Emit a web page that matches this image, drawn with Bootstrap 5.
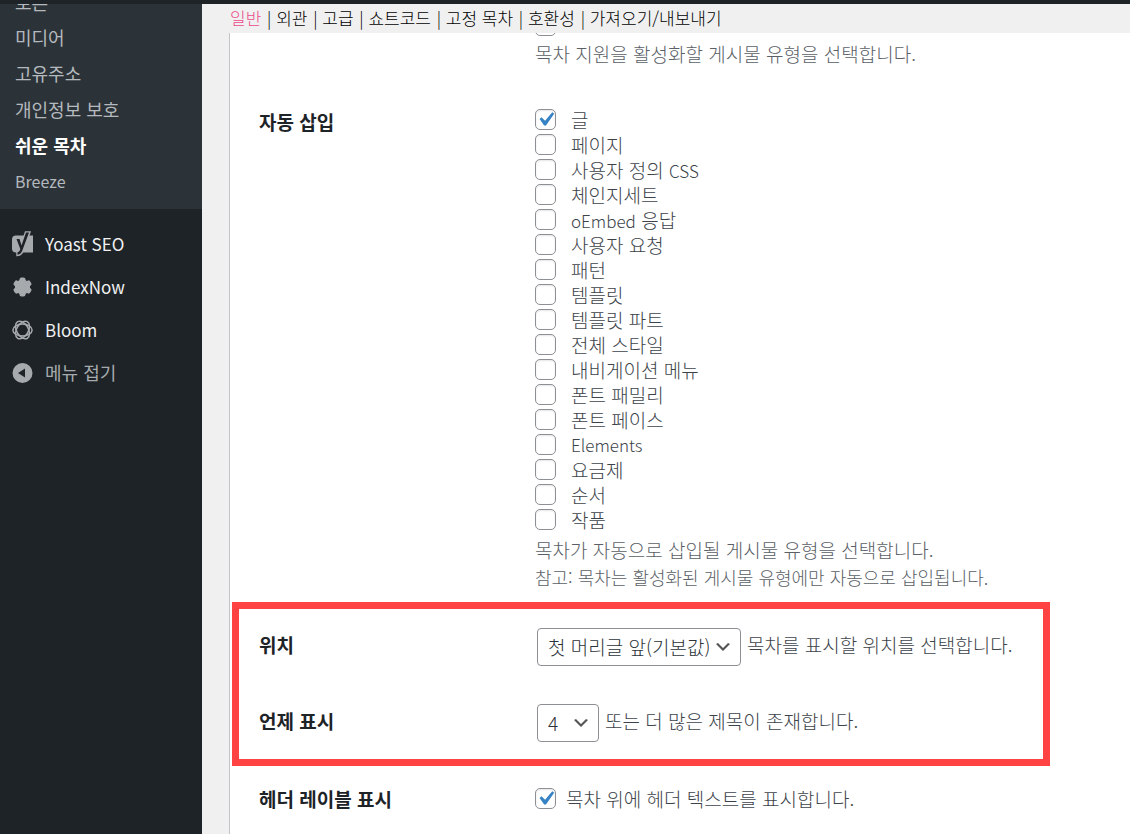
<!DOCTYPE html>
<html lang="ko">
<head>
<meta charset="utf-8">
<meta name="viewport" content="width=device-width, initial-scale=1">
<title>쉬운 목차</title>
<link href="https://cdn.jsdelivr.net/npm/bootstrap@5.3.0/dist/css/bootstrap.min.css" rel="stylesheet">
<style>
body { font-family: "Noto Sans CJK KR", sans-serif; font-size: 19px; font-weight: 300; line-height: 25px; color: #3c434a; background: #f0f0f0; }
.admin-bar { height: 4px; background: #1d2327; }
.side { width: 202px; flex: none; background: #1d2327; font-size: 18px; font-weight: 400; }
.side a, .side button { text-decoration: none; }
.submenu { background: #2c3338; padding-bottom: 9px; }
.submenu a { display: block; height: 36px; line-height: 35px; padding-left: 15px; color: #b4b9be; }
.submenu a.current { color: #fff; font-weight: 700; }
.submenu a.latin-item { font-size: 16px; }
.submenu .scrolled { height: 16px; overflow: hidden; display: flex; align-items: flex-end; }
.submenu .scrolled a { line-height: 37px; }
.main-menu { padding-top: 13px; }
.main-menu a, .main-menu button { height: 43px; padding: 0 0 0 11px; gap: 11px; color: #f0f0f1; }
.main-menu a { font-size: 17px; }
.main-menu button { color: #a7aaad; }
.main-menu svg { width: 23px; height: 26px; flex: none; }
.content-area { padding-left: 27px; }
.tabs { height: 29px; padding-left: 1px; font-size: 17px; line-height: 27px; color: #000; white-space: nowrap; }
.tabs a { color: #000; text-decoration: none; margin-right: 1px; }
.tabs a.current { color: #eb4b8c; }
.panel { background: #fff; border-left: 1px solid #c3c4c7; }
.setting { padding-left: 29px; }
.setting-name { width: 276px; flex: none; font-size: 19px; font-weight: 700; color: #1d2327; }
.auto-insert { padding-top: 41px; }
.auto-insert .setting-name { padding-top: 2px; }
.hint { color: #5a6066; margin-top: 5px; }
.note-text { font-size: 18px; margin-top: 3px; }
.latin { font-size: 17px; }
.form-check-input.box { width: 21px; height: 21px; margin: 0; border: 1px solid #8c8f94; border-radius: 5px; background-color: #fff; box-shadow: inset 0 1px 2px rgba(0,0,0,.1); flex: none; }
.form-check-input.box:checked { background-color: #fff; border-color: #8c8f94; background-size: 28px; background-position: center; background-image: url("data:image/svg+xml,%3Csvg xmlns='http://www.w3.org/2000/svg' viewBox='0 0 20 20'%3E%3Cpath d='M14.83 4.89l1.34.94-5.81 8.38H9.02L5.78 9.67l1.34-1.25 2.57 2.4z' fill='%233582c4'/%3E%3C/svg%3E"); }
.box-cut { height: 3px; overflow: hidden; display: flex; align-items: flex-end; }
.types label { height: 25px; gap: 15px; }
.form-select.pick { width: auto; height: 38px; padding: 0 31px 0 10px; font-size: 19px; font-weight: 300; line-height: 36px; color: #2c3338; border: 1px solid #8c8f94; border-radius: 4px; background-size: 20px 20px; background-position: right 7px center; background-image: url("data:image/svg+xml,%3Csvg xmlns='http://www.w3.org/2000/svg' viewBox='0 0 20 20'%3E%3Cpath d='M5 6l5 5 5-5 2 1-7 7-7-7 2-1z' fill='%23555'/%3E%3C/svg%3E"); }
.form-select.pick-number { width: 62px; }
.marked { max-width: 818px; margin: 12px 0 0 2px; border: 7px solid #ff4343; padding: 19px 0 17px; }
.marked .setting { padding-left: 20px; }
.marked .setting + .setting { margin-top: 38px; }
.marked .setting-name { width: 278px; padding-bottom: 6px; }
.marked .after { padding-bottom: 6px; }
.pair { gap: 6px; }
.header-row { padding-top: 20px; }
.header-row .pair { gap: 10px; }
</style>
</head>
<body>
<div class="admin-bar"></div>
<div class="d-flex">
  <nav class="side" aria-label="관리자 메뉴">
    <div class="submenu">
      <div class="scrolled"><a href="#">토론</a></div>
      <a href="#">미디어</a>
      <a href="#">고유주소</a>
      <a href="#">개인정보 보호</a>
      <a href="#" class="current">쉬운 목차</a>
      <a href="#" class="latin-item">Breeze</a>
    </div>
    <div class="main-menu d-flex flex-column">
      <a href="#" class="d-flex align-items-center">
        <svg viewBox="0 0 23 26"><path d="M5 4.500h17v17H5q-4 0-4-4v-9q0-4 4-4z" fill="#a7aaad"/><path d="M14.500 1h4.500l-6.500 18q-1.800 5.500-6.500 5.500v-3.500q3 0 3.200-3z" fill="#a7aaad" stroke="#a7aaad" stroke-width="1.500"/><path d="M5.500 8h3l2 6.500L15 1.500h3L11.500 19q-1.500 4.500-5 4.700v-2.200q2.500-.5 2.800-3.500z" fill="#1d2327"/></svg>
        Yoast SEO</a>
      <a href="#" class="d-flex align-items-center">
        <svg viewBox="0 0 23 26"><g fill="#a7aaad"><circle cx="11.500" cy="13" r="7.600"/><rect id="lobe" x="8.500" y="3.500" width="6" height="19" rx="2"/><use href="#lobe" transform="rotate(60 11.500 13)"/><use href="#lobe" transform="rotate(120 11.500 13)"/></g></svg>
        IndexNow</a>
      <a href="#" class="d-flex align-items-center">
        <svg viewBox="0 0 23 26" fill="none" stroke="#a7aaad" stroke-width="1.500"><ellipse id="ring" cx="11.500" cy="13" rx="9.600" ry="5.900"/><use href="#ring" transform="rotate(60 11.500 13)"/><use href="#ring" transform="rotate(120 11.500 13)"/></svg>
        Bloom</a>
      <button type="button" class="d-flex align-items-center border-0 bg-transparent text-start">
        <svg viewBox="0 0 23 26"><circle cx="11.500" cy="13" r="10" fill="#a7aaad"/><path d="M14 8.500v9L7 13z" fill="#1d2327"/></svg>
        메뉴 접기</button>
    </div>
  </nav>
  <main class="content-area flex-grow-1 d-flex flex-column min-vh-100">
    <div class="tabs"><a href="#" class="current">일반</a> | <a href="#">외관</a> | <a href="#">고급</a> | <a href="#">쇼트코드</a> | <a href="#">고정 목차</a> | <a href="#">호환성</a> | <a href="#">가져오기/내보내기</a></div>
    <form class="panel flex-grow-1">
      <div class="setting d-flex">
        <div class="setting-name"></div>
        <div>
          <div class="box-cut"><input type="checkbox" class="form-check-input box" aria-label="작품"></div>
          <div class="hint">목차 지원을 활성화할 게시물 유형을 선택합니다.</div>
        </div>
      </div>
      <div class="setting auto-insert d-flex">
        <div class="setting-name">자동 삽입</div>
        <div>
          <div class="types d-flex flex-column align-items-start">
            <label class="d-flex align-items-center"><input type="checkbox" class="form-check-input box" checked>글</label>
            <label class="d-flex align-items-center"><input type="checkbox" class="form-check-input box">페이지</label>
            <label class="d-flex align-items-center"><input type="checkbox" class="form-check-input box"><span>사용자 정의 <span class="latin">CSS</span></span></label>
            <label class="d-flex align-items-center"><input type="checkbox" class="form-check-input box">체인지세트</label>
            <label class="d-flex align-items-center"><input type="checkbox" class="form-check-input box"><span><span class="latin">oEmbed</span> 응답</span></label>
            <label class="d-flex align-items-center"><input type="checkbox" class="form-check-input box">사용자 요청</label>
            <label class="d-flex align-items-center"><input type="checkbox" class="form-check-input box">패턴</label>
            <label class="d-flex align-items-center"><input type="checkbox" class="form-check-input box">템플릿</label>
            <label class="d-flex align-items-center"><input type="checkbox" class="form-check-input box">템플릿 파트</label>
            <label class="d-flex align-items-center"><input type="checkbox" class="form-check-input box">전체 스타일</label>
            <label class="d-flex align-items-center"><input type="checkbox" class="form-check-input box">내비게이션 메뉴</label>
            <label class="d-flex align-items-center"><input type="checkbox" class="form-check-input box">폰트 패밀리</label>
            <label class="d-flex align-items-center"><input type="checkbox" class="form-check-input box">폰트 페이스</label>
            <label class="d-flex align-items-center"><input type="checkbox" class="form-check-input box"><span class="latin">Elements</span></label>
            <label class="d-flex align-items-center"><input type="checkbox" class="form-check-input box">요금제</label>
            <label class="d-flex align-items-center"><input type="checkbox" class="form-check-input box">순서</label>
            <label class="d-flex align-items-center"><input type="checkbox" class="form-check-input box">작품</label>
          </div>
          <div class="hint">목차가 자동으로 삽입될 게시물 유형을 선택합니다.</div>
          <div class="hint note-text">참고: 목차는 활성화된 게시물 유형에만 자동으로 삽입됩니다.</div>
        </div>
      </div>
      <div class="marked">
        <div class="setting d-flex align-items-center">
          <label class="setting-name" for="position">위치</label>
          <div class="pair d-flex align-items-center">
            <select id="position" class="form-select pick"><option>첫 머리글 앞(기본값)</option></select>
            <span class="after">목차를 표시할 위치를 선택합니다.</span>
          </div>
        </div>
        <div class="setting d-flex align-items-center">
          <label class="setting-name" for="count">언제 표시</label>
          <div class="pair d-flex align-items-center">
            <select id="count" class="form-select pick pick-number"><option>4</option></select>
            <span class="after">또는 더 많은 제목이 존재합니다.</span>
          </div>
        </div>
      </div>
      <div class="setting header-row d-flex">
        <label class="setting-name" for="header">헤더 레이블 표시</label>
        <div class="pair d-flex align-items-center">
          <input type="checkbox" class="form-check-input box" id="header" checked>
          <label for="header">목차 위에 헤더 텍스트를 표시합니다.</label>
        </div>
      </div>
    </form>
  </main>
</div>
<script src="https://cdn.jsdelivr.net/npm/bootstrap@5.3.0/dist/js/bootstrap.bundle.min.js"></script>
</body>
</html>
